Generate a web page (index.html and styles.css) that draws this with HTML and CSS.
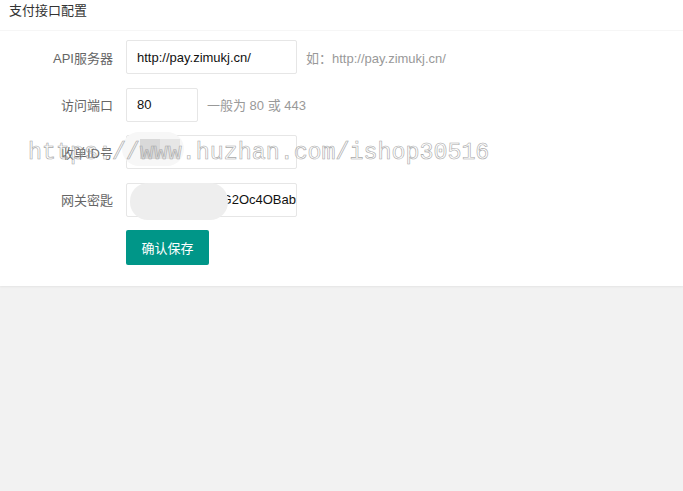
FILE: index.html
```html
<!DOCTYPE html>
<html lang="zh-CN">
<head>
    <meta charset="UTF-8">
    <meta name="viewport" content="width=device-width, initial-scale=1.0">
    <title>支付接口配置</title>
    <link rel="stylesheet" href="styles.css">
</head>
<body>
    <div class="card">
        <div class="card-header">支付接口配置</div>
        <form class="card-body">
            <div class="form-item">
                <label class="form-label">API服务器</label>
                <input class="form-input" type="text" value="http://pay.zimukj.cn/">
                <span class="form-tip">如：http://pay.zimukj.cn/</span>
            </div>
            <div class="form-item">
                <label class="form-label">访问端口</label>
                <input class="form-input short" type="text" value="80">
                <span class="form-tip">一般为 80 或 443</span>
            </div>
            <div class="form-item">
                <label class="form-label">收单ID号</label>
                <div class="input-wrap">
                    <input class="form-input" type="text" value="">
                    <div class="blur blur-id">
                        <span class="sq sq-a"></span>
                        <span class="sq sq-b"></span>
                    </div>
                </div>
            </div>
            <div class="form-item">
                <label class="form-label">网关密匙</label>
                <div class="input-wrap">
                    <input class="form-input align-end" type="text" value="G2Oc4OBab">
                    <div class="blur blur-key"></div>
                </div>
            </div>
            <div class="form-item">
                <span class="form-label"></span>
                <button class="btn" type="button">确认保存</button>
            </div>
        </form>
    </div>

    <div class="watermark">https://www.huzhan.com/ishop30516</div>
</body>
</html>
```

FILE: styles.css
```css
body {
    margin: 0;
    background-color: #f2f2f2;
    font-family: Arial, "Liberation Sans", "Noto Sans CJK SC", sans-serif;
    font-size: 13px;
    color: #333;
    min-height: 100vh;
    position: relative;
}
.card {
    background-color: #fff;
    box-shadow: 0 1px 2px rgba(0, 0, 0, 0.06);
}
.card-header {
    height: 30px;
    line-height: 21px;
    padding-left: 9px;
    border-bottom: 1px solid #f6f6f6;
    color: #333;
}
.card-body {
    margin: 0;
    padding: 9px 0 21px;
    display: flex;
    flex-direction: column;
    gap: 13.5px;
}
.form-item {
    display: flex;
    align-items: center;
}
.form-label {
    width: 113px;
    padding-right: 13px;
    text-align: right;
    color: #666;
    flex-shrink: 0;
}
.form-input {
    box-sizing: border-box;
    width: 171px;
    height: 34px;
    padding: 0 10px;
    border: 1px solid #e6e6e6;
    border-radius: 2px;
    font-family: Arial, "Liberation Sans", sans-serif;
    font-size: 13px;
    color: #111;
    background: #fff;
    outline: none;
}
.form-input.short {
    width: 72px;
}
.form-input.align-end {
    text-align: right;
    padding-right: 0;
}
.form-tip {
    margin-left: 9px;
    color: #999;
}
.input-wrap {
    position: relative;
}
.blur {
    position: absolute;
    border-radius: 18px;
    background-color: #f3f3f3;
}
.blur-id {
    left: -4px;
    top: -3px;
    width: 62px;
    height: 34px;
    background-color: #f7f7f7;
}
.sq {
    position: absolute;
    top: 7px;
    height: 20px;
    width: 20px;
}
.sq-a {
    left: 18px;
    background-color: #d9d9d9;
}
.sq-b {
    left: 38px;
    background-color: #e6e6e6;
}
.blur-key {
    left: 4px;
    top: 0;
    width: 98px;
    height: 37px;
    background-color: #eeeeee;
}
.btn {
    width: 83px;
    height: 35px;
    background-color: #009688;
    color: #fff;
    border: none;
    border-radius: 2px;
    font-family: "Noto Sans CJK SC", sans-serif;
    font-size: 13px;
    cursor: pointer;
}
.watermark {
    position: absolute;
    left: 28px;
    top: 140px;
    font-family: "Liberation Mono", monospace;
    font-size: 23.3px;
    color: transparent;
    -webkit-text-stroke: 0.6px #a8a8a8;
    white-space: nowrap;
    pointer-events: none;
}
```
